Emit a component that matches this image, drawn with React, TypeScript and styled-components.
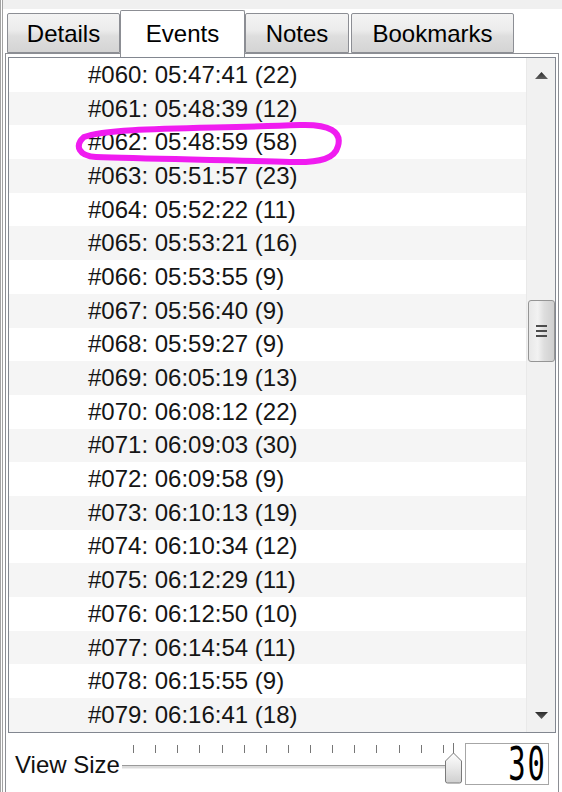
import React from "react";
import styled, { createGlobalStyle } from "styled-components";

const GlobalStyle = createGlobalStyle`
  html, body { margin: 0; padding: 0; background: #ffffff; }
  body {
    width: 562px; height: 792px; overflow: hidden;
    font-family: "Liberation Sans", Arial, sans-serif;
  }
`;

const Page = styled.div`
  position: relative;
  width: 562px;
  height: 792px;
  overflow: hidden;
  background: #ffffff;
`;

const Window = styled.div`
  display: flex;
  flex-direction: column;
  height: 100%;
  box-sizing: border-box;
  border-left: 3px double #a3a3a3;
`;

const TopBand = styled.div`
  flex: none;
  height: 9px;
  background: #f0f0f0;
`;

const TabStrip = styled.div`
  flex: none;
  display: flex;
  align-items: flex-end;
  height: 44px;
  margin-left: 4px;
  position: relative;
  z-index: 1;
`;

const Tab = styled.div<{ $w: number; $active?: boolean; $gap?: number }>`
  box-sizing: border-box;
  width: ${(p) => p.$w}px;
  height: ${(p) => (p.$active ? 47 : 40)}px;
  margin-bottom: ${(p) => (p.$active ? -4 : 0)}px;
  margin-right: ${(p) => p.$gap ?? 0}px;
  padding-top: ${(p) => (p.$active ? 0 : 2)}px;
  border: 1px solid #8c8e94;
  border-bottom: ${(p) => (p.$active ? "none" : "1px solid #8c8e94")};
  border-radius: 2px 2px 0 0;
  background: ${(p) =>
    p.$active
      ? "#ffffff"
      : "linear-gradient(#f4f4f4 0%, #ececec 42%, #dedede 58%, #d4d4d4 100%)"};
  display: flex;
  align-items: center;
  justify-content: center;
  font-size: 24px;
  color: #000000;
  white-space: nowrap;
`;

const Panel = styled.div`
  flex: 1;
  margin-left: 2px;
  width: 554px;
  box-sizing: border-box;
  border: 1px solid #8c8e94;
  border-bottom: none;
  padding: 3px 2px 0;
  display: flex;
  flex-direction: column;
`;

const ListBox = styled.div`
  flex: none;
  height: 676px;
  box-sizing: border-box;
  border: 1px solid #828790;
  display: flex;
  background: #ffffff;
`;

const Rows = styled.div`
  flex: 1;
  display: flex;
  flex-direction: column;
`;

const Row = styled.div<{ $alt: boolean }>`
  height: 33.7px;
  display: flex;
  align-items: center;
  padding-left: 79px;
  font-size: 24px;
  color: #151515;
  background: ${(p) => (p.$alt ? "#f5f5f5" : "#ffffff")};
  white-space: nowrap;
`;

const ScrollBar = styled.div`
  flex: none;
  width: 29px;
  display: flex;
  flex-direction: column;
  background: #f1f1f1;
  box-sizing: border-box;
  border-left: 1px solid #e9e9e9;
`;

const ScrollBtn = styled.div`
  flex: none;
  height: 34px;
  display: flex;
  align-items: center;
  justify-content: center;
`;

const Track = styled.div`
  flex: 1;
  display: flex;
  flex-direction: column;
  align-items: center;
`;

const Thumb = styled.div`
  margin-top: 208px;
  width: 27px;
  height: 62px;
  box-sizing: border-box;
  border: 1px solid #959595;
  border-radius: 3px;
  background: linear-gradient(to right, #e8e8e8 0%, #f2f2f2 35%, #dedede 60%, #cfcfcf 100%);
  display: flex;
  flex-direction: column;
  align-items: center;
  justify-content: center;
  gap: 3px;
`;

const Grip = styled.div`
  width: 11px;
  height: 2px;
  background: #4c4c4c;
`;

const BottomRow = styled.div`
  flex: 1;
  display: flex;
  align-items: flex-start;
  padding-left: 7px;
`;

const Label = styled.div`
  flex: none;
  width: 107px;
  margin-top: 19px;
  font-size: 24px;
  line-height: 26px;
  color: #111111;
  white-space: nowrap;
`;

const Slider = styled.div`
  flex: none;
  position: relative;
  width: 343px;
  height: 59px;
`;

const SliderTrack = styled.div`
  position: absolute;
  left: 0;
  top: 32px;
  width: 332px;
  height: 2px;
  border-top: 1px solid #9a9a9a;
  background: #dcdcdc;
  border-bottom: 1px solid #eeeeee;
`;

const Ticks = styled.div`
  position: absolute;
  left: 11px;
  top: 12px;
  display: flex;
  gap: 21.14px;
`;

const Tick = styled.div`
  width: 1px;
  height: 8px;
  background: #777777;
`;

const EndTick = styled.div`
  position: absolute;
  left: 331px;
  top: 10px;
  width: 1px;
  height: 10px;
  background: #777777;
`;

const ThumbSvg = styled.svg`
  position: absolute;
  left: 322px;
  top: 19px;
`;

const NumberBox = styled.div`
  flex: none;
  margin-top: 10px;
  width: 84px;
  height: 42px;
  box-sizing: border-box;
  border: 1px solid #a6a6a6;
  background: #ffffff;
  display: flex;
  align-items: center;
  justify-content: flex-end;
  padding-right: 3px;
`;

const Digits = styled.span`
  display: inline-block;
  font-family: "DejaVu Sans Mono", "Liberation Mono", monospace;
  font-size: 32px;
  line-height: 24px;
  color: #000000;
  transform: scale(0.9, 1.45);
  transform-origin: right center;
  letter-spacing: 2px;
  margin-right: -2px;
`;

const Annotation = styled.svg`
  position: absolute;
  left: 0;
  top: 0;
  pointer-events: none;
`;

const rows: [string, string, string][] = [
  ["060", "05:47:41", "22"],
  ["061", "05:48:39", "12"],
  ["062", "05:48:59", "58"],
  ["063", "05:51:57", "23"],
  ["064", "05:52:22", "11"],
  ["065", "05:53:21", "16"],
  ["066", "05:53:55", "9"],
  ["067", "05:56:40", "9"],
  ["068", "05:59:27", "9"],
  ["069", "06:05:19", "13"],
  ["070", "06:08:12", "22"],
  ["071", "06:09:03", "30"],
  ["072", "06:09:58", "9"],
  ["073", "06:10:13", "19"],
  ["074", "06:10:34", "12"],
  ["075", "06:12:29", "11"],
  ["076", "06:12:50", "10"],
  ["077", "06:14:54", "11"],
  ["078", "06:15:55", "9"],
  ["079", "06:16:41", "18"],
];

const Arrow = ({ down }: { down?: boolean }) => (
  <svg width="13" height="7" viewBox="0 0 13 7">
    <defs>
      <linearGradient id={down ? "ad" : "au"} x1="0" y1="0" x2="0" y2="1">
        <stop offset="0" stopColor="#2a2a2a" />
        <stop offset="1" stopColor="#606060" />
      </linearGradient>
    </defs>
    <polygon
      points={down ? "0,0 13,0 6.5,7" : "0,7 13,7 6.5,0"}
      fill={`url(#${down ? "ad" : "au"})`}
    />
  </svg>
);

export default function App() {
  return (
    <>
      <GlobalStyle />
      <Page>
        <Window>
          <TopBand />
          <TabStrip>
            <Tab $w={113}>Details</Tab>
            <Tab $w={125} $active>
              Events
            </Tab>
            <Tab $w={104} $gap={2}>
              Notes
            </Tab>
            <Tab $w={163}>Bookmarks</Tab>
          </TabStrip>
          <Panel>
            <ListBox>
              <Rows>
                {rows.map(([n, t, c], i) => (
                  <Row key={n} $alt={i % 2 === 1}>
                    {`#${n}: ${t} (${c})`}
                  </Row>
                ))}
              </Rows>
              <ScrollBar>
                <ScrollBtn>
                  <Arrow />
                </ScrollBtn>
                <Track>
                  <Thumb>
                    <Grip />
                    <Grip />
                    <Grip />
                  </Thumb>
                </Track>
                <ScrollBtn>
                  <Arrow down />
                </ScrollBtn>
              </ScrollBar>
            </ListBox>
            <BottomRow>
              <Label>View Size</Label>
              <Slider>
                <SliderTrack />
                <Ticks>
                  {Array.from({ length: 15 }).map((_, i) => (
                    <Tick key={i} />
                  ))}
                </Ticks>
                <EndTick />
                <ThumbSvg width="19" height="32" viewBox="0 0 19 32">
                  <defs>
                    <linearGradient id="th" x1="0" y1="0" x2="0" y2="1">
                      <stop offset="0" stopColor="#ffffff" />
                      <stop offset="0.5" stopColor="#e8e8e8" />
                      <stop offset="1" stopColor="#cfcfcf" />
                    </linearGradient>
                  </defs>
                  <path
                    d="M9.5 1 L17.5 9 L17.5 29 Q17.5 31 15.5 31 L3.5 31 Q1.5 31 1.5 29 L1.5 9 Z"
                    fill="url(#th)"
                    stroke="#7a7a7a"
                    strokeWidth="1"
                  />
                </ThumbSvg>
              </Slider>
              <NumberBox>
                <Digits>30</Digits>
              </NumberBox>
            </BottomRow>
          </Panel>
        </Window>
        <Annotation width="562" height="792" viewBox="0 0 562 792">
          <path
            d="M84 137 C 110 127, 200 129, 300 125 C 330 124, 342 132, 338 146 C 335 158, 322 163, 290 162 C 240 160, 150 159, 96 157 C 79 156, 74 146, 84 137 Z"
            fill="none"
            stroke="#f01cf0"
            strokeWidth="6"
            strokeLinejoin="round"
          />
        </Annotation>
      </Page>
    </>
  );
}
